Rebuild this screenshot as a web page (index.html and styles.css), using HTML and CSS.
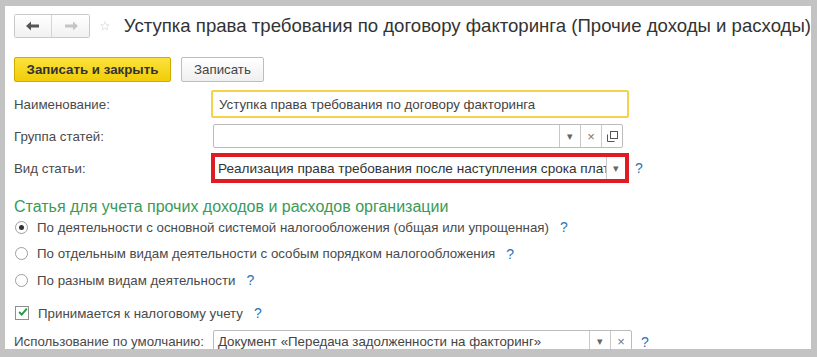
FILE: index.html
```html
<!DOCTYPE html>
<html lang="ru">
<head>
    <meta charset="UTF-8">
    <title>Уступка права требования по договору факторинга</title>
    <link rel="stylesheet" href="styles.css">
</head>
<body>
    <div class="panel">
        <div class="title-bar">
            <div class="nav-group">
                <button class="nav-button back">
                    <svg width="14" height="10" viewBox="0 0 14 10"><path d="M0 5 L5 0.5 L5 3.5 L13 3.5 L13 6.5 L5 6.5 L5 9.5 Z" fill="#555"/></svg>
                </button>
                <button class="nav-button forward">
                    <svg width="14" height="10" viewBox="0 0 14 10"><path d="M14 5 L9 0.5 L9 3.5 L1 3.5 L1 6.5 L9 6.5 L9 9.5 Z" fill="#c4c4c4"/></svg>
                </button>
            </div>
            <svg class="star" width="18" height="18" viewBox="0 0 18 18"><path d="M9 1.2 L11.2 6.4 L16.8 6.8 L12.5 10.5 L13.9 16 L9 13 L4.1 16 L5.5 10.5 L1.2 6.8 L6.8 6.4 Z" fill="none" stroke="#cfcfcf" stroke-width="1"/></svg>
            <h1 class="title">Уступка права требования по договору факторинга (Прочие доходы и расходы)</h1>
        </div>

        <div class="command-bar">
            <button class="cmd-button primary">Записать и закрыть</button>
            <button class="cmd-button">Записать</button>
        </div>

        <div class="form-row row-name">
            <label class="field-label">Наименование:</label>
            <div class="field field-focus">Уступка права требования по договору факторинга</div>
        </div>

        <div class="form-row row-group">
            <label class="field-label">Группа статей:</label>
            <div class="field field-select group-field">
                <span class="field-text"></span>
                <span class="field-btn">&#9662;</span>
                <span class="field-btn clear">&#215;</span>
                <span class="field-btn open">
                    <svg width="11" height="11" viewBox="0 0 11 11"><rect x="3.5" y="0.5" width="7" height="7" fill="none" stroke="#555"/><path d="M0.5 3.5 V10.5 H7.5" fill="none" stroke="#555"/></svg>
                </span>
            </div>
        </div>

        <div class="form-row row-kind">
            <label class="field-label">Вид статьи:</label>
            <div class="highlight-box">
                <div class="field field-select kind-field">
                    <span class="field-text">Реализация права требования после наступления срока платежа</span>
                    <span class="field-btn">&#9662;</span>
                </div>
            </div>
            <span class="help">?</span>
        </div>

        <h2 class="section-title">Статья для учета прочих доходов и расходов организации</h2>

        <div class="radio-list">
            <div class="radio-item">
                <span class="radio checked"></span>
                <span class="radio-text">По деятельности с основной системой налогообложения (общая или упрощенная)</span>
                <span class="help">?</span>
            </div>
            <div class="radio-item">
                <span class="radio"></span>
                <span class="radio-text">По отдельным видам деятельности с особым порядком налогообложения</span>
                <span class="help">?</span>
            </div>
            <div class="radio-item">
                <span class="radio"></span>
                <span class="radio-text">По разным видам деятельности</span>
                <span class="help">?</span>
            </div>
        </div>

        <div class="check-item">
            <span class="checkbox">
                <svg width="13" height="12" viewBox="0 0 13 12"><path d="M1.5 6 L4.8 9.5 L11.5 1.5" fill="none" stroke="#1f9a3c" stroke-width="2.4"/></svg>
            </span>
            <span class="radio-text">Принимается к налоговому учету</span>
            <span class="help">?</span>
        </div>

        <div class="form-row row-usage">
            <label class="usage-label">Использование по умолчанию:</label>
            <div class="field field-select usage-field">
                <span class="field-text">Документ «Передача задолженности на факторинг»</span>
                <span class="field-btn">&#9662;</span>
                <span class="field-btn clear">&#215;</span>
            </div>
            <span class="help">?</span>
        </div>
    </div>
</body>
</html>
```

FILE: styles.css
```css
body {
    margin: 0;
    background-color: #c3c3c3;
    font-family: Arial, "Liberation Sans", sans-serif;
    font-size: 13.3px;
    color: #4a4a4a;
}
.panel {
    background-color: #fff;
    margin: 6px 6px 0 5px;
    height: 343px;
    overflow: hidden;
    padding: 0 0 0 9px;
    box-sizing: border-box;
}
.title-bar {
    display: flex;
    align-items: center;
    height: 34px;
    padding-top: 3px;
    white-space: nowrap;
}
.nav-group {
    display: flex;
    border: 1px solid #c9c9c9;
    border-radius: 2px;
    height: 22px;
}
.nav-button {
    width: 37px;
    height: 22px;
    border: none;
    padding: 0;
    background: linear-gradient(#ffffff, #f1f1f1);
    display: flex;
    align-items: center;
    justify-content: center;
}
.nav-button.back {
    border-right: 1px solid #d4d4d4;
}
.star {
    margin-left: 10px;
    margin-right: 14px;
}
.title {
    margin: 0;
    font-weight: normal;
    font-size: 18.6px;
    color: #333;
}
.command-bar {
    display: flex;
    gap: 10px;
    margin-top: 14px;
    height: 25px;
}
.cmd-button {
    height: 25px;
    padding: 0 12px;
    font-family: inherit;
    font-size: 13.3px;
    color: #444;
    border: 1px solid #bdbdbd;
    border-radius: 2px;
    background: linear-gradient(#ffffff, #efefef);
    white-space: nowrap;
}
.cmd-button.primary {
    width: 157px;
    padding: 0;
    font-weight: bold;
    color: #333;
    border-color: #cfac00;
    background: linear-gradient(#fbe23c, #f1cd08);
}
.form-row {
    display: flex;
    align-items: center;
}
.field-label {
    width: 197px;
    flex: none;
}
.field {
    border: 1px solid #bcbcbc;
    border-radius: 2px;
    box-sizing: border-box;
    color: #444;
    display: flex;
    align-items: center;
    white-space: nowrap;
    overflow: hidden;
}
.row-name {
    margin-top: 8px;
    height: 28px;
}
.field-focus {
    width: 418px;
    height: 28px;
    border: 2px solid #f2d34a;
    padding-left: 6px;
}
.row-group {
    margin-top: 6px;
    height: 24px;
}
.group-field {
    margin-left: 2px;
    width: 410px;
    height: 24px;
}
.field-text {
    flex: 1;
    min-width: 0;
    padding-left: 6px;
    overflow: hidden;
}
.field-btn {
    width: 20px;
    height: 100%;
    border-left: 1px solid #c9c9c9;
    display: flex;
    align-items: center;
    justify-content: center;
    font-size: 11px;
    color: #666;
    flex: none;
}
.field-btn.clear {
    font-size: 13px;
    color: #777;
}
.row-kind {
    margin-top: 5px;
    height: 30px;
}
.highlight-box {
    width: 418px;
    height: 30px;
    border: 4px solid #e01b24;
    box-sizing: border-box;
}
.kind-field {
    width: 100%;
    height: 100%;
    border: none;
    border-radius: 0;
}
.kind-field .field-text {
    padding-left: 3px;
    font-size: 13.6px;
    color: #333;
}
.kind-field .field-btn {
    width: 18px;
}
.help {
    color: #2d74b5;
    font-size: 14px;
    margin-left: 6px;
}
.section-title {
    margin: 15px 0 0 0;
    font-weight: normal;
    font-size: 16px;
    color: #3a9a58;
    height: 18px;
    line-height: 18px;
    white-space: nowrap;
}
.radio-list {
    display: flex;
    flex-direction: column;
    gap: 4.5px;
}
.radio-item {
    display: flex;
    align-items: center;
    height: 22px;
}
.radio {
    width: 11px;
    height: 11px;
    border: 1px solid #9e9e9e;
    border-radius: 50%;
    margin-left: 1px;
    margin-right: 9px;
    display: flex;
    align-items: center;
    justify-content: center;
    background: #fff;
}
.radio.checked::after {
    content: "";
    width: 5px;
    height: 5px;
    border-radius: 50%;
    background: #333;
}
.radio-text {
    color: #4a4a4a;
}
.radio-item .help,
.check-item .help {
    margin-left: 11px;
}
.check-item {
    display: flex;
    align-items: center;
    height: 20px;
    margin-top: 12px;
}
.checkbox {
    width: 12px;
    height: 12px;
    border: 1px solid #8f8f8f;
    margin-left: 1px;
    margin-right: 9px;
    display: flex;
    align-items: center;
    justify-content: center;
}
.checkbox svg {
    margin-top: -2px;
    margin-left: 2px;
}
.row-usage {
    margin-top: 7px;
    height: 23px;
}
.usage-label {
    margin-right: 9px;
    white-space: nowrap;
}
.usage-field {
    width: 419px;
    height: 23px;
}
.usage-field .field-text {
    padding-left: 4px;
}
.row-usage .help {
    margin-left: 9px;
}
```
